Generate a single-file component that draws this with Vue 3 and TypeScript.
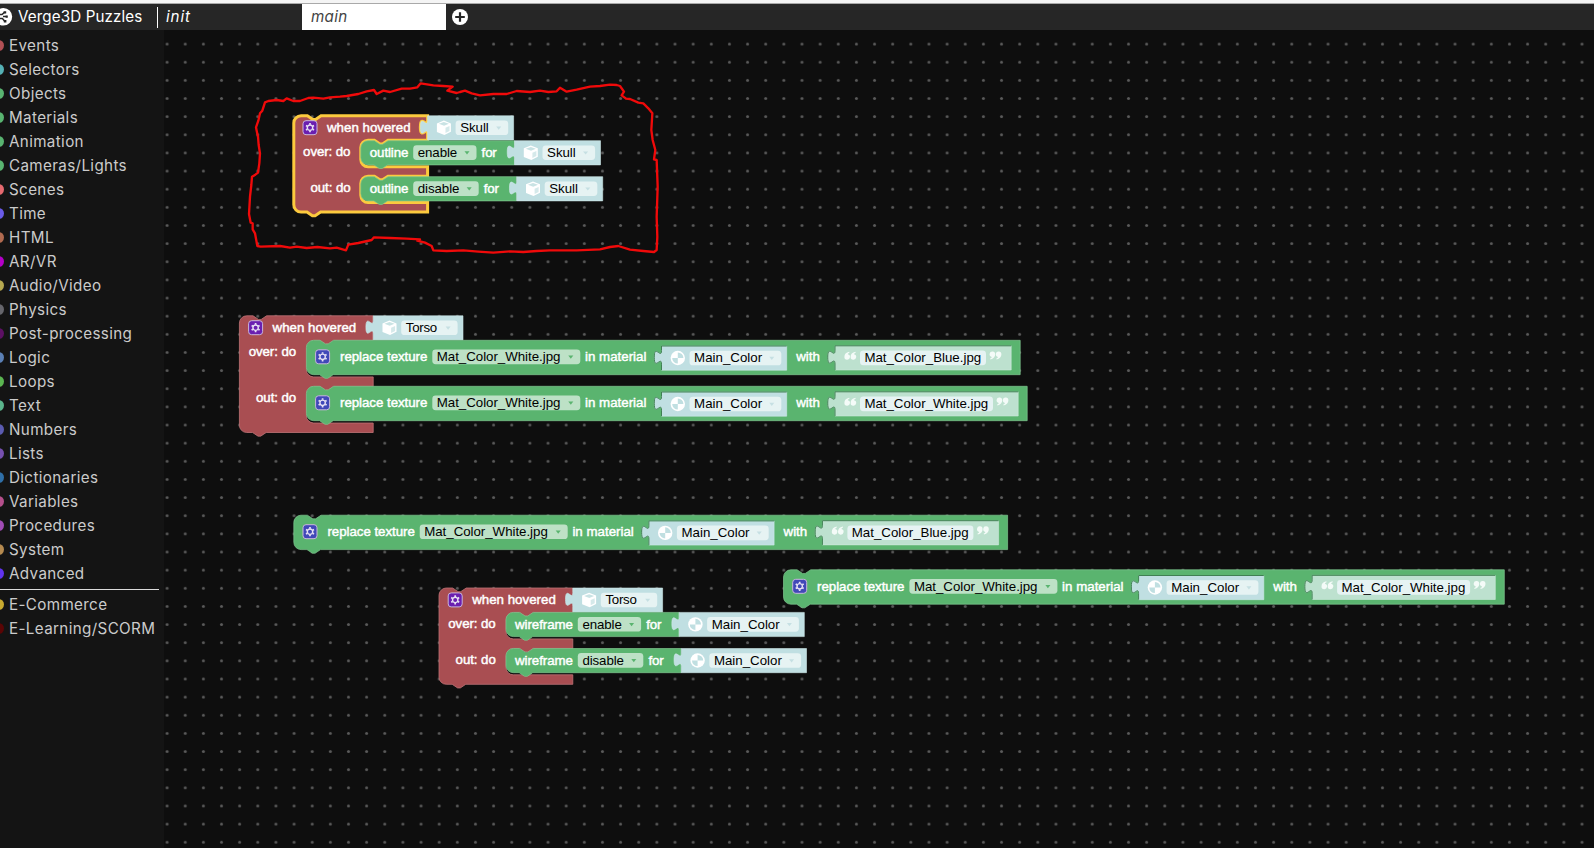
<script setup lang="ts">
type Kind = 'label' | 'value'
interface Word { x: number; y: number; w: number; t: string; kind: Kind }
interface Field { x: number; y: number; w: number; tone: 'green' | 'pale'; arrow: boolean }
interface Shape { d: string; tone: string }
interface Icon { x: number; y: number; kind: 'cube' | 'ball' | 'gear' | 'gearBlue' | 'open' | 'close' }

const categories: [string, string][] = [
  ['Events', '#b15055'], ['Selectors', '#55b1b5'], ['Objects', '#59b471'], ['Materials', '#59b471'],
  ['Animation', '#59b471'], ['Cameras/Lights', '#59b471'], ['Scenes', '#e5696f'], ['Time', '#6a5be8'],
  ['HTML', '#b06a50'], ['AR/VR', '#b400c8'], ['Audio/Video', '#b5a850'], ['Physics', '#66666c'],
  ['Post-processing', '#5c1064'], ['Logic', '#5b80b5'], ['Loops', '#5bb551'], ['Text', '#5bb58c'],
  ['Numbers', '#5b5bb0'], ['Lists', '#7650b0'], ['Dictionaries', '#2f6fa8'], ['Variables', '#b5508c'],
  ['Procedures', '#a04cb5'], ['System', '#b58a50'], ['Advanced', '#6033f0'],
]
const plugins: [string, string][] = [['E-Commerce', '#c8aa30'], ['E-Learning/SCORM', '#5a0505']]

// Block geometry uses a 20-unit grid drawn at the workspace zoom level.
const K = 0.907
const n = (v: number) => +(v * K).toFixed(2)
const R = n(8)
const notchIn = `l${n(6)},${n(4)} h${n(3)} l${n(6)},${-n(4)}`
const notchOut = `l${-n(6)},${n(4)} h${-n(3)} l${-n(6)},${-n(4)}`
const tab = `v${n(5)} c0,${n(10)} ${-n(8)},${-n(8)} ${-n(8)},${n(7.5)} s${n(8)},${-n(2.5)} ${n(8)},${n(7.5)}`

const shapes: Shape[] = []
const fields: Field[] = []
const words: Word[] = []
const icons: Icon[] = []

const word = (x: number, y: number, w: number, t: string, kind: Kind = 'label') => words.push({ x, y, w, t, kind })
const field = (x: number, y: number, w: number, tone: 'green' | 'pale', arrow = true) => fields.push({ x, y, w, tone, arrow })

function statement(x: number, y: number, w: number, h: number) {
  shapes.push({
    tone: 'green',
    d: `M${x},${y + R} a${R},${R} 0 0 1 ${R},${-R} H${x + n(15)} ${notchIn} H${x + w} V${y + h} H${x + n(29.5)} ${notchOut} H${x + R} a${R},${R} 0 0 1 ${-R},${-R} z`,
  })
}
function valueBlock(x: number, y: number, w: number, tone = 'pale', inset = false) {
  shapes.push({ tone, d: `M${x},${y} ${tab} V${y + 24.2} H${x + w} V${y} z` })
  if (inset) shapes.push({ tone: 'shade', d: `M${x},${y + 24.2} V${y + n(20)} M${x + w},${y} H${x} ${tab}` })
}
function picker(x: number, y: number, w: number, t: string, tw: number, kind: 'cube' | 'ball', inset = false) {
  valueBlock(x, y, w, 'pale', inset)
  icons.push({ x: x + 16.3, y: y + 12, kind })
  field(x + 28, y + 4.7, w - 33.4, 'pale')
  word(x + 32.6, y + 16.2, tw, t, 'value')
}
function eventBlock(x: number, y: number, first: number, second: number, selected: boolean, target: string, tw: number, pw: number) {
  const c = x + 67
  const r = x + 133.8
  const cut = (top: number, h: number) =>
    `V${top} H${c + n(30)} ${notchOut} H${c + R} a${R},${R} 0 0 0 ${-R},${R} V${top + h + 2.2 - R} a${R},${R} 0 0 0 ${R},${R} H${r}`
  const s1 = y + 24.5
  const s2 = s1 + first + 11.7
  const bottom = s2 + second + 11.7
  shapes.push({
    tone: selected ? 'red selected' : 'red',
    d: `M${x},${y + R} a${R},${R} 0 0 1 ${R},${-R} H${x + n(15)} ${notchIn} H${r} ${tab} ${cut(s1, first)} ${cut(s2, second)} V${bottom} H${x + n(29.5)} ${notchOut} H${x + R} a${R},${R} 0 0 1 ${-R},${-R} z`,
  })
  icons.push({ x: x + 16.2, y: y + 11.9, kind: 'gear' })
  word(x + 33.2, y + 16.1, 83.6, 'when hovered')
  word(x + 9.3, y + 40.3, 47.4, 'over: do')
  word(x + 16.6, y + (first > 30 ? 86.3 : 76.3), 40.2, 'out: do')
  picker(r, y, pw, target, tw, 'cube')
}
function toggle(x: number, y: number, verb: string, vw: number, mode: string, mw: number, fw: number, target: string, tw: number, pw: number, kind: 'cube' | 'ball') {
  const fx = x + 13.8 + vw
  const right = fx + fw + 38
  statement(x, y, right - x, 24.2)
  word(x + 9, y + 16.3, vw, verb)
  field(fx, y + 4.6, fw, 'green')
  word(fx + 4.6, y + 16.3, mw, mode, 'value')
  word(fx + fw + 5.1, y + 16.3, 15.2, 'for')
  picker(right, y, pw, target, tw, kind)
}
function replaceTexture(x: number, y: number, file: string, fw: number) {
  statement(x, y, 588.8 + fw, 34.4)
  icons.push({ x: x + 16.2, y: y + 16.5, kind: 'gearBlue' })
  word(x + 33.6, y + 20.8, 87.4, 'replace texture')
  field(x + 125.9, y + 9.3, 148, 'green')
  word(x + 130.4, y + 20.8, 123.6, 'Mat_Color_White.jpg', 'value')
  word(x + 278.6, y + 20.8, 61.4, 'in material')
  picker(x + 355.1, y + 5.7, 125.2, 'Main_Color', 68, 'ball', true)
  word(x + 489.8, y + 20.8, 23.6, 'with')
  valueBlock(x + 528.6, y + 5.5, 51.2 + fw, 'mint', true)
  icons.push({ x: x + 543.8, y: y + 15.6, kind: 'open' })
  field(x + 553.6, y + 10.3, fw + 1, 'pale', false)
  word(x + 558, y + 21.8, fw - 8.2, file, 'value')
  icons.push({ x: x + 564.2 + fw, y: y + 15, kind: 'close' })
}

eventBlock(293.8, 115.8, 24.2, 24.2, true, 'Skull', 28.6, 86)
toggle(360.8, 140.7, 'outline', 38.6, 'enable', 39.4, 63.3, 'Skull', 28.6, 86, 'cube')
toggle(360.8, 176.7, 'outline', 38.6, 'disable', 41.6, 65.5, 'Skull', 28.6, 86, 'cube')

eventBlock(239.4, 315.8, 34.4, 34.4, false, 'Torso', 31.4, 89.8)
replaceTexture(306.4, 340.3, 'Mat_Color_Blue.jpg', 125)
replaceTexture(306.4, 386.3, 'Mat_Color_White.jpg', 132)

replaceTexture(293.8, 515.2, 'Mat_Color_Blue.jpg', 125)
replaceTexture(783.5, 569.8, 'Mat_Color_White.jpg', 132)

eventBlock(439, 588, 24.2, 24.2, false, 'Torso', 31.4, 89.8)
toggle(506, 612.4, 'wireframe', 58, 'enable', 39.4, 63.3, 'Main_Color', 68, 125.2, 'ball')
toggle(506, 648.5, 'wireframe', 58, 'disable', 41.6, 65.5, 'Main_Color', 68, 125.2, 'ball')

const marker = '115,93 105,97 97,122 90,130 85,152 78,172 80,182 84,200 86,225 90,250 88,280 84,308 76,314 66,320 64,345 60,380 57,432 62,458 68,460 68,478 75,490 82,528 92,530 150,528 180,533 200,530 230,534 262,531 300,535 320,533 348,541 355,524 385,519 425,510 432,502 480,504 530,506 570,508 562,512 585,518 605,528 610,541 650,543 700,541 745,545 790,548 840,544 880,546 920,543 960,541 1040,541 1110,538 1140,531 1165,528 1200,539 1240,543 1272,546 1280,540 1282,500 1280,440 1283,350 1280,270 1272,268 1276,240 1268,210 1264,180 1267,130 1255,115 1240,100 1225,98 1200,87 1188,86 1175,76 1182,65 1170,48 1160,45 1140,44 1110,48 1080,50 1040,59 1010,65 990,53 980,64 955,66 930,62 900,66 860,63 830,72 790,72 750,76 725,70 705,62 690,66 680,69 652,62 668,50 640,48 610,46 572,40 562,52 540,56 515,56 480,66 460,62 440,72 432,60 410,64 385,72 350,78 330,80 300,82 280,86 250,83 235,84 210,93 190,93 170,85 160,93 140,90'
</script>

<template>
  <div class="app">
    <div class="edge"></div>
    <header class="bar">
      <svg class="logo" width="13" height="20" viewBox="0 0 13 20">
        <circle cx="3.4" cy="9.8" r="8.8" fill="#fff" />
        <path d="M0 7.6H2L4.6 5.2M0 11.4H2.4L4.8 14.2M3 9.6H6.6" fill="none" stroke="#262626" stroke-width="1.5" />
        <path d="M3.6 4.2H6.2V6.6H3.6ZM3.8 13H6.4V15.4H3.8ZM5.6 8.4H7.8V10.8H5.6Z" fill="#262626" />
      </svg>
      <span class="brand">Verge3D Puzzles</span>
      <span class="tab first">init</span>
      <span class="tab active">main</span>
      <svg class="plus" width="16" height="16" viewBox="0 0 16 16">
        <circle cx="8" cy="8" r="8" fill="#fff" />
        <path d="M8 3.2V12.8M3.2 8H12.8" stroke="#262626" stroke-width="2.2" />
      </svg>
    </header>
    <div class="body">
      <nav class="side">
        <div v-for="[name, color] in categories" :key="name" class="item">
          <i class="dot" :style="{ background: color }"></i><span>{{ name }}</span>
        </div>
        <div class="rule"></div>
        <div v-for="[name, color] in plugins" :key="name" class="item">
          <i class="dot" :style="{ background: color }"></i><span>{{ name }}</span>
        </div>
      </nav>
      <svg class="space" width="1430" height="818" viewBox="164 30 1430 818">
        <defs>
          <pattern id="grid" x="158" y="35" width="18.14" height="18.14" patternUnits="userSpaceOnUse">
            <circle cx="9.1" cy="9.1" r="1.5" fill="#5a5a5a" />
          </pattern>
        </defs>
        <rect x="164" y="30" width="1430" height="818" fill="url(#grid)" />
        <path v-for="(s, i) in shapes" :key="'s' + i" :d="s.d" :class="s.tone" />
        <template v-for="(f, i) in fields" :key="'f' + i">
          <rect :x="f.x" :y="f.y" :width="f.w" height="14.6" rx="3.4" :class="'field-' + f.tone" />
          <path v-if="f.arrow" :d="`M${f.x + f.w - 12},${f.y + 6} h5 l-2.5,3.2 z`" :class="'arrow-' + f.tone" />
        </template>
        <g v-for="(c, i) in icons" :key="'i' + i" :transform="`translate(${c.x} ${c.y})`">
          <template v-if="c.kind === 'cube'">
            <path d="M0-7.3 7-4.4V4L.5 7.3-7 4.2V-4.4Z" fill="#fff" />
            <path d="M-5-4 .2-2 5-4 0-5.8Z" fill="#c9e3e4" />
            <path d="M1.6 0 5.6-1.8V3.2L1.6 5.2Z" fill="#d5e9ea" />
          </template>
          <template v-else-if="c.kind === 'ball'">
            <circle r="7.2" fill="#fff" />
            <path d="M0 0V-5.6A5.6 5.6 0 0 1 5.6 0ZM0 0V5.6A5.6 5.6 0 0 1-5.6 0Z" fill="#c0dfe1" />
          </template>
          <template v-else-if="c.kind === 'open' || c.kind === 'close'">
            <g :transform="c.kind === 'close' ? 'rotate(180)' : undefined" fill="#f4fbf8">
              <path d="M-1-4.2C-4.2-3.6-5.8-1.6-5.8 1a2.8 2.8 0 1 0 3.4-2.7C-2.2-2.4-1.6-2.9-.7-3.2Z" />
              <path d="M5.2-4.2C2-3.6.4-1.6.4 1a2.8 2.8 0 1 0 3.4-2.7C4-2.4 4.6-2.9 5.5-3.2Z" />
            </g>
          </template>
          <template v-else>
            <rect x="-7" y="-7" width="14" height="14" rx="3" :fill="c.kind === 'gear' ? '#6a1fb0' : '#4148b8'" stroke="#c9b6dc" stroke-width="1" />
            <circle r="2.7" fill="none" stroke="#e6e0f4" stroke-width="1.4" />
            <path d="M0-4.6V-3M0 4.6V3M-4-2.3-2.6-1.5M4 2.3 2.6 1.5M-4 2.3-2.6 1.5M4-2.3 2.6-1.5" stroke="#e6e0f4" stroke-width="1.7" />
          </template>
        </g>
        <text v-for="(w, i) in words" :key="'w' + i" :x="w.x" :y="w.y" :textLength="w.w" :class="w.kind">{{ w.t }}</text>
        <polygon :points="marker" transform="translate(230 70) scale(.33333)" class="marker" />
      </svg>
    </div>
  </div>
</template>

<style>
body { background: #0e0e0e; overflow: hidden; }
</style>
<style scoped>
.app { width: 1594px; height: 848px; overflow: hidden; display: flex; flex-direction: column; background: #0e0e0e; font-family: Inter, "Liberation Sans", sans-serif; }
.edge { height: 3px; background: #f4f4f4; border-bottom: 1px solid #a9a9a9; }
.bar { height: 26px; display: flex; align-items: center; background: #262626; color: #fff; }
.logo { width: 13px; flex: none; }
.brand { width: 139px; padding: 0 0 1px 5px; box-sizing: border-box; font-size: 15.2px; letter-spacing: .11px; white-space: nowrap; }
.tab { box-sizing: border-box; width: 144px; height: 26px; line-height: 25px; padding-left: 9px; font-style: italic; font-size: 15.2px; letter-spacing: .3px; }
.first { width: 145px; height: 21px; line-height: 19px; border-left: 1px solid #fff; margin-left: 5px; padding-left: 8px; letter-spacing: .9px; }
.active { background: #fff; color: #444; }
.plus { margin-left: 6px; }
.body { flex: 1; display: flex; }
.side { width: 164px; box-sizing: border-box; padding-top: 3px; background: #141414; color: #cbcbcb; overflow: hidden; }
.item { height: 24px; display: flex; align-items: center; font-size: 15.2px; letter-spacing: .36px; white-space: nowrap; }
.dot { width: 11px; height: 11px; border-radius: 50%; margin-left: -7px; margin-right: 5px; flex: none; }
.rule { width: 159px; height: 1px; margin: 4px 0 2px; background: #dcdcdc; }
.space { display: block; }
.red { fill: #a94e52; stroke: #bf7477; stroke-width: .8; }
.selected { stroke: #fcca3e; stroke-width: 3; }
.green { fill: #5ab46f; stroke: #7fc68f; stroke-width: .7; }
.pale { fill: #c0dfe2; stroke: #cfe7e9; stroke-width: .6; }
.mint { fill: #bde1cf; stroke: #cdeadb; stroke-width: .6; }
.shade { fill: none; stroke: #3f8052; stroke-width: 1; }
.field-green { fill: #bde1c6; }
.field-pale { fill: #e6f3f3; }
.arrow-green { fill: #5ab46f; }
.arrow-pale { fill: #c6e0e3; }
.label { fill: #fff; stroke: #fff; stroke-width: .45; font: 13.3px "Liberation Sans", sans-serif; }
.value { fill: #000; font: 13.3px "Liberation Sans", sans-serif; }
.marker { fill: none; stroke: #f00a0a; stroke-width: 7; stroke-linejoin: round; }
</style>
